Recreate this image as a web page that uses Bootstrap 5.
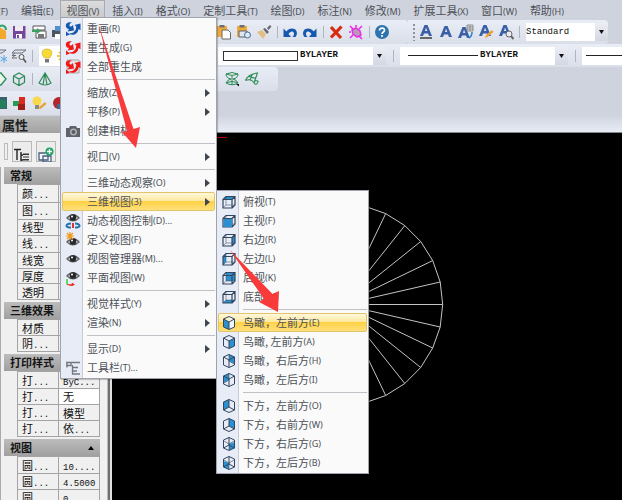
<!DOCTYPE html>
<html lang="zh-CN">
<head>
<meta charset="utf-8">
<meta name="viewport" content="width=device-width, initial-scale=1">
<title>CAD</title>
<link href="https://cdn.jsdelivr.net/npm/bootstrap@5.3.0/dist/css/bootstrap.min.css" rel="stylesheet">
<style>
body{height:100vh;background:#cfd3dd;font:11px/18px "Noto Sans CJK SC",sans-serif;color:#4c5159}
small{font:9px/1 "Noto Sans",sans-serif}
button{font:inherit;color:inherit}
.menubar{height:18px;margin-bottom:2px}
.menubar button{border:1px solid transparent;border-bottom:0;background:none;padding:0 5px;line-height:16px;height:18px;margin-right:1px;flex:none}
.menubar button.open{background:linear-gradient(#dcdcdc,#c9c9c9);border-color:#a9abb0}
.menubar button:first-child{margin-left:-30px}
.bar{background:linear-gradient(#e9edf6,#d9dee8);height:24px;border-radius:0 4px 4px 0}
.tool{width:20px;height:20px;border:0;background:none;padding:0;display:flex;align-items:center;justify-content:center;flex:none}
svg.ico{width:16px;height:16px;flex:none}
.sepv{width:6px;height:12px;flex:none;background:linear-gradient(#aeb4c0,#aeb4c0) center/1px 12px no-repeat}
.grip{width:4px;height:18px;flex:none;background:radial-gradient(circle,#8d93a0 1px,transparent 1px) 0 0/4px 4px}
.left{width:214px;flex:none;overflow:hidden}
.left .tools{margin-left:-11px}
.combo{background:#fff;height:18px;flex:none;color:#111;font:9px/1 "Liberation Mono",monospace}
.combo select{appearance:none;border:0;background:none;font:inherit;color:inherit;padding:0;width:40px;flex:1}
.combo .drop{width:13px;height:18px;background:linear-gradient(#eceef4,#d3d7e2);display:flex;align-items:center;justify-content:center}
.combo .drop svg{width:5px;height:4px}
.bylayer{font-weight:bold}
.c-color{width:168px;padding-left:5px}
.c-line{width:168px}
.c-style{width:82px}
.swatch{width:75px;height:10px;border:1px solid #333;margin-right:2px}
.rule{height:1px;background:#222}
.c-line .rule{width:70px;margin-right:2px}
.layerbox{background:#fff;width:170px;height:20px}
.side{width:108px;flex:none;background:#f0f0f0;color:#111;border-right:1px solid #bbb;overflow:hidden;margin-top:1px}
.side h2{font:bold 13px/17px "Noto Sans CJK SC",sans-serif;background:linear-gradient(#bdbdbd,#a2a2a2);margin:0;padding-left:2px;height:17px;color:#222}
.side .sbtn{width:20px;height:21px;border:1px solid #b9b9b9;background:#ececec;padding:1px;flex:none}
.side .hand{width:4px;height:17px;border:1px solid #bbb;flex:none}
.props{border-left:1px solid #aaa;margin-top:5px;padding-left:3px;width:100px}
.sect h3{font:bold 11px/17px "Noto Sans CJK SC",sans-serif;height:17px;margin:0;padding:0 6px;background:linear-gradient(#bcbcbc,#a0a0a0);color:#151515}
.sect{margin-bottom:2px}
.sect h3 svg{width:6px;height:4px}
.sect table{width:83px;margin-left:13px;table-layout:fixed;border-collapse:collapse}
.sect td,.sect th{border:1px solid #a4a4a4;padding:0 0 0 4px;font-weight:400;line-height:14px;white-space:nowrap;overflow:hidden}
.sect i{font:9px/1 "Liberation Mono",monospace}
.rows7{height:116px}.rows2{height:33px}.rows4{height:66px}.rows3{height:50px}
.splitter{width:4px;flex:none;background:linear-gradient(90deg,#6f6f6f 2px,#e0e0e0 2px)}
.strip{height:18px;background:linear-gradient(#cfd3dd,#e8ecf5);border-bottom:1px solid #85888e}
.model{background:#000;min-height:0}
.model svg{width:400px;height:366px}
.cadmenu.dropdown-menu{--bs-dropdown-min-width:0;--bs-dropdown-font-size:11px;padding:1px;margin:0;border:1px solid #a0a3a9;border-radius:0;line-height:17px;background:linear-gradient(90deg,#e8ecf6 21px,#c9ccd4 21px,#c9ccd4 22px,#fafafa 22px);box-shadow:1px 1px 1px #0003}
.cadmenu .dropdown-item{display:flex;align-items:center;height:19px;padding:0 4px 0 0;color:#4c5159;border:1px solid transparent;border-radius:2px}
.cadmenu .dropdown-item.hot{background:linear-gradient(#fff8dc,#ffe9a0 45%,#ffd246 50%,#ffe07a);border-color:#e3c36c}
.cadmenu .pic{width:20px;margin-right:4px;display:flex;justify-content:center}
.cadmenu hr{margin:3px 0 3px 25px;border-top:1px solid #bfc1c6;opacity:1}
.cadmenu .more{width:5px;height:8px;margin-left:auto;fill:#3f4650}
.m1.dropdown-menu{left:60px;top:17px;width:157px}
.m2.dropdown-menu{left:216px;top:190px;width:153px}
.hl{fill:#2b8fd0}
.marks{left:0;top:0;width:622px;height:500px;z-index:2000;pointer-events:none;fill:#f93a3a}
</style>
<script src="https://cdn.jsdelivr.net/npm/bootstrap@5.3.0/dist/js/bootstrap.bundle.min.js"></script>
</head>
<body class="d-flex flex-column overflow-hidden position-relative">
<svg class="d-none">
<symbol id="cube" viewBox="0 0 16 16"><path d="M2 5.500h9v8.500H2zM2 5.500L5 2.500h9V11l-3 3M11 5.500l3-3" fill="none" stroke="#33475e" stroke-width="1.200"/><path d="M5 2.500V11M2 14l3-3h9" fill="none" stroke="#33475e" stroke-width=".5"/></symbol>
<symbol id="iso" viewBox="0 0 16 16"><path d="M8 1.500L13.500 4v8L8 14.500 2.500 12V4zM2.500 4L8 7l5.500-3M8 7v7.500" fill="none" stroke="#33475e"/></symbol>
<symbol id="iso2" viewBox="0 0 16 16"><path d="M8 1.500L13.500 4v8L8 14.500 2.500 12V4zM2.500 12L8 9l5.500 3M8 1.500V9" fill="none" stroke="#33475e"/></symbol>
<symbol id="swap" viewBox="0 0 16 16"><path d="M7 1.500C3 .5 .5 2.500 .8 5 1 7 2.500 7.800 4 8L2.500 10.500 9 9.500 8 4 6.300 5.600C4 5.500 3.500 3 7 1.500z"/><path d="M15.500 2.500L9.500 4l1.700 1.500C11.500 9 9 12.500 4 12.500 7.500 15.500 13 13 13.500 8l2 1.200z"/><path d="M1 10.500v4.500l4-1.500z"/></symbol>
<symbol id="eye" viewBox="0 0 16 16"><path d="M1 8Q8 0 15 8Q8 15 1 8z" fill="#5d6064"/><path d="M3 8Q8 3.500 13 8Q8 12 3 8z" fill="#e9e9e9"/><circle cx="8" cy="7.500" r="3.300" fill="#26282b"/><circle cx="7" cy="6.500" r="1" fill="#fff"/></symbol>
<symbol id="undo" viewBox="0 0 16 16"><path d="M1.500 4.500V13H9L6.500 10C8 7.300 11.500 6.500 12 9.500c.2 1.500-.6 2.500-1.500 3.500h3C15.500 11 15.500 7 13 5.300 10 3.500 6.500 4.500 4.300 7.500z" fill="#1558ae"/></symbol>
<symbol id="down" viewBox="0 0 5 4"><path d="M0 0h5L2.500 4z" fill="#111"/></symbol>
<symbol id="more" viewBox="0 0 5 8"><path d="M0 0l5 4-5 4z"/></symbol>
<symbol id="letter" viewBox="0 0 16 16"><path d="M2 13L6.500 2h3L14 13h-3l-1-2.500H6L5 13zM7 8h2.300L8 4.500z" fill="#3a5fa6"/></symbol>
<symbol id="paste" viewBox="0 0 16 16"><path d="M1 2h10v11H1z" fill="#f0a93b"/><path d="M3.500 1h5v2.500h-5z" fill="#6b6f76"/></symbol>
<symbol id="layers" viewBox="0 0 16 16"><path d="M4 2h11l-4 3H1zM1 7.500h4M4 5l-3 2.500M1 10h5M4 7.500L1 10" fill="none" stroke="#6b7078"/></symbol>
</svg>

<nav class="menubar d-flex flex-nowrap" aria-label="菜单">
<button>文件<small>(F)</small></button><button>编辑<small>(E)</small></button><button class="open">视图<small>(V)</small></button><button>插入<small>(I)</small></button><button>格式<small>(O)</small></button><button>定制工具<small>(T)</small></button><button>绘图<small>(D)</small></button><button>标注<small>(N)</small></button><button>修改<small>(M)</small></button><button>扩展工具<small>(X)</small></button><button>窗口<small>(W)</small></button><button>帮助<small>(H)</small></button>
</nav>

<div class="d-flex">
 <div class="bar d-flex align-items-center left rounded-0"><div class="tools d-flex">
  <button class="tool" aria-label="打开"><svg class="ico" viewBox="0 0 16 16"><path d="M1 4h9l5 3v8H1z" fill="#f3a92e"/><path d="M8 3c3-3 7-1 7 3" fill="none" stroke="#2fa36b" stroke-width="2"/></svg></button>
  <button class="tool" aria-label="保存"><svg class="ico" viewBox="0 0 16 16"><path d="M2 2h12.500v12.500H2z" fill="#74479b"/><path d="M4 2h8v5H4z" fill="#efe9f5"/><path d="M5 10h6v4.500H5z" fill="#fff"/><path d="M6 11h2v3H6z" fill="#74479b"/></svg></button>
  <button class="tool" aria-label="另存"><svg class="ico" viewBox="0 0 16 16"><path d="M2 2h12v4H2zM5 7h10v7H5z" fill="#fff" stroke="#555"/><path d="M7 10h6v4H7z" fill="#777"/><path d="M1 6h5V4l4 3-4 3V8H1z" fill="#38a060"/></svg></button>
  <button class="tool" aria-label="打印"><svg class="ico" viewBox="0 0 16 16"><path d="M1 6h14v7H1z" fill="#4d5660"/><path d="M4 2h8v5H4z" fill="#4f90d0"/><path d="M4 10h8v5H4z" fill="#fff"/></svg></button>
 </div></div>
 <div class="bar d-flex align-items-center pe-3">
  <button class="tool" aria-label="粘贴"><svg class="ico" viewBox="0 0 16 16"><use href="#paste"/><path d="M6 6h6l2.500 2.500V15H6z" fill="#fff" stroke="#666"/></svg></button>
  <button class="tool" aria-label="粘贴为块"><svg class="ico" viewBox="0 0 16 16"><use href="#paste"/><path d="M3 7h8v6H3z" fill="#dfe6ef" stroke="#58616e"/><circle cx="11.500" cy="11" r="3" fill="#dce9f6" stroke="#4b6c94"/></svg></button>
  <button class="tool" aria-label="格式刷"><svg class="ico" viewBox="0 0 16 16"><path d="M1 8l5-2 4 4-3 5z" fill="#e3bd83"/><path d="M7 5l2-1 4 4-2 2zM11 4l3-3 1.500 1.500L12.500 6z" fill="#666a70"/></svg></button>
  <span class="sepv"></span>
  <button class="tool" aria-label="撤销"><svg class="ico"><use href="#undo"/></svg></button>
  <button class="tool" aria-label="重做"><svg class="ico" viewBox="0 0 16 16"><path d="M14.500 4.500V13H7L9.500 10C8 7.300 4.500 6.500 4 9.500c-.2 1.500.6 2.500 1.500 3.500h-3C.5 11 .5 7 3 5.300 6 3.500 9.500 4.500 11.700 7.500z" fill="#1558ae"/></svg></button>
  <span class="sepv"></span>
  <button class="tool" aria-label="删除"><svg class="ico" viewBox="0 0 16 16"><path d="M3 3l10 11M13.500 2.500L3 13.500" stroke="#dc2a10" stroke-width="3.200"/></svg></button>
  <button class="tool" aria-label="清理"><svg class="ico" viewBox="0 0 16 16"><path d="M4 6l4-2 4 3 1 4-4 2-4-3z" fill="#b79bb9" stroke="#e72fe0" stroke-width="1.500"/><path d="M2 2l3 3M14 2l-3 3M2 14l3-3M14 15l-3-3M8 1v2M1 8h2" stroke="#f022e6" stroke-width="1.500"/></svg></button>
  <span class="sepv"></span>
  <button class="tool" aria-label="帮助"><svg class="ico" viewBox="0 0 16 16"><circle cx="8" cy="8" r="7" fill="#2d74ae"/><path d="M5.500 6.500C5.500 3 11 3.500 10.500 6.500 10.300 8 8 8 8 10" fill="none" stroke="#fff" stroke-width="1.700"/><circle cx="8" cy="12" r="1.100" fill="#fff"/></svg></button>
 </div>
 <div class="bar d-flex align-items-center flex-none">
  <span class="grip ms-1"></span>
  <button class="tool" aria-label="文字"><svg class="ico" viewBox="0 0 16 16"><use href="#letter" y="-1"/><path d="M2 14h12" stroke="#222" stroke-width="1.300"/></svg></button>
  <button class="tool" aria-label="单行文字"><svg class="ico"><use href="#letter"/></svg></button>
  <button class="tool" aria-label="文字对齐"><svg class="ico" viewBox="0 0 16 16"><use href="#letter" x="-2" y="1"/><path d="M9 1h6v6H9zM9 3h6M9 5h6M12 1v6" fill="#eee" stroke="#777" stroke-width=".8"/><path d="M14 8c0 4-1 5-3 6" fill="none" stroke="#2486cf" stroke-width="1.500"/></svg></button>
  <button class="tool" aria-label="编辑文字"><svg class="ico" viewBox="0 0 16 16"><use href="#letter" x="-1" y="-1"/><path d="M7 14l1-3 6-5 1.500 2-6 5z" fill="#eda33c"/></svg></button>
  <button class="tool" aria-label="查找"><svg class="ico" viewBox="0 0 16 16"><use href="#letter" x="-1" y="-1"/><circle cx="11" cy="10" r="3" fill="#e8ecf4" stroke="#666"/><path d="M13 12l2.500 3" stroke="#666" stroke-width="2"/></svg></button>
  <span class="sepv me-1"></span>
  <div class="combo c-style d-flex align-items-center"><select aria-label="文字样式"><option>Standard</option></select><span class="drop"><svg><use href="#down"/></svg></span></div>
 </div>
</div>

<div class="bar d-flex align-items-center rounded-0">
 <div class="left d-flex align-items-center me-1"><div class="tools d-flex align-items-center">
  <button class="tool" aria-label="冻结"><svg class="ico" viewBox="0 0 16 16"><use href="#layers"/><path d="M13 7v8M9.500 9l7 4M9.500 13l7-4" stroke="#58a6e8"/></svg></button>
  <button class="tool" aria-label="图层"><svg class="ico" viewBox="0 0 16 16"><use href="#layers"/><circle cx="10.500" cy="9" r="2.500" fill="#eee" stroke="#555"/><path d="M12.500 11l2.500 3.500" stroke="#555" stroke-width="1.600"/></svg></button>
  <span class="sepv me-1"></span>
  <div class="layerbox d-flex align-items-center"><svg class="ico" viewBox="0 0 16 16"><path d="M8 1c6 0 6 5 2.500 9h-5C2 6 2 1 8 1z" fill="#f8d935" stroke="#c9a92b" stroke-width=".6"/><path d="M6 11h4v3.500H6z" fill="#777"/></svg><svg class="ico" viewBox="0 0 16 16"><path d="M8 2v12M2 8h12M4 4l8 8M12 4l-8 8" stroke="#f1ba16" stroke-width="1.500"/><circle cx="8" cy="8" r="3" fill="#f8d935"/></svg></div>
 </div></div>
 <div class="combo c-color bylayer d-flex align-items-center"><span class="swatch"></span><select aria-label="颜色"><option>BYLAYER</option></select><span class="drop"><svg><use href="#down"/></svg></span></div>
 <span class="sepv mx-1"></span>
 <div class="combo c-line bylayer d-flex align-items-center"><span class="rule ms-2"></span><select aria-label="线型"><option>BYLAYER</option></select><span class="drop"><svg><use href="#down"/></svg></span></div>
 <span class="sepv mx-1"></span>
 <div class="combo flex-fill d-flex align-items-center"><span class="rule ms-1 flex-fill"></span></div>
</div>

<div class="d-flex">
 <div class="bar d-flex align-items-center left rounded-0"><div class="tools d-flex align-items-center">
  <button class="tool" aria-label="面"><svg class="ico" viewBox="0 0 16 16"><path d="M4 2h6l5 6-5 6H5z" fill="#e9f5ec" stroke="#2c8a55" stroke-width="1.300"/></svg></button>
  <button class="tool" aria-label="长方体"><svg class="ico" viewBox="0 0 16 16"><path d="M8 2l5.500 3v6.500L8 14.500l-5.500-3V5zM2.500 5L8 8l5.500-3M8 8v6.500" fill="none" stroke="#2c8a55" stroke-width="1.200"/></svg></button>
  <span class="sepv"></span>
  <button class="tool" aria-label="圆锥"><svg class="ico" viewBox="0 0 16 16"><path d="M8 2L2 12q6 4 12 0zM8 2L6 14M8 2l2 12" fill="none" stroke="#2c8a55" stroke-width="1.200"/></svg></button>
 </div></div>
 <div class="bar d-flex align-items-center ps-2 pe-3">
  <button class="tool" aria-label="旋转曲面"><svg class="ico" viewBox="0 0 16 16"><path d="M2 3q6-3 12 0 0 4-5 5 4 1 5 4-6 3.500-12 0 1-3 5-4-5-1-5-5zM2 3q6 3 12 0M8 5v9M3 11.500q5-2 10 0" fill="none" stroke="#2c8a55"/><path d="M12 13h3v2.500z" fill="#111"/></svg></button>
  <button class="tool" aria-label="边界曲面"><svg class="ico" viewBox="0 0 16 16"><path d="M1.500 9.500Q4 3 13.500 2L10 12M1.500 9.500q5-2 8 1.500 2 4 4 1t-3-2M5 5q2 2 7 2M8.500 3L6 9" fill="none" stroke="#2c8a55" stroke-width="1.100"/></svg></button>
 </div>
</div>

<div class="bar left d-flex align-items-center rounded-0"><div class="tools d-flex">
 <button class="tool" aria-label="渲染"><svg class="ico" viewBox="0 0 16 16"><path d="M1 2h15v12H1z" fill="#39616b"/><path d="M9 5h6v8H9z" fill="#257f5d"/></svg></button>
 <button class="tool" aria-label="材质"><svg class="ico" viewBox="0 0 16 16"><path d="M2 6h6v5H2z" fill="#2b9a55"/><path d="M8 2h6v7H8z" fill="#d92b20"/><path d="M7 9h7v6H7z" fill="#a01c18"/></svg></button>
 <button class="tool" aria-label="光源"><svg class="ico" viewBox="0 0 16 16"><circle cx="6" cy="6" r="4.500" fill="#fbd84a"/><path d="M4 10h4v4H4z" fill="#8a8a80"/><path d="M7 13l7-6 1.500 2-6 5z" fill="#e6a33b"/></svg></button>
 <button class="tool" aria-label="贴图"><svg class="ico" viewBox="0 0 16 16"><circle cx="8" cy="8" r="6" fill="#b3262a"/><path d="M6 9h9v5H6z" fill="#3f6796"/></svg></button>
</div></div>

<main class="d-flex flex-fill overflow-hidden">
 <aside class="side">
  <h2>属性</h2>
  <div class="d-flex align-items-center ps-1 pt-2 gap-1 overflow-hidden">
   <span class="hand"></span>
   <button class="sbtn" aria-label="分类"><svg class="ico" viewBox="0 0 16 16"><path d="M0 2.500h7M3 2.500V13M7 5v9M7 8h2M7 13h2" stroke="#222" stroke-width="1.400" fill="none"/><path d="M9 6.500h6V8H9zM9 12h6v1.500H9zM9 9.500h6v1H9z" fill="#333"/></svg></button>
   <button class="sbtn" aria-label="选择"><svg class="ico" viewBox="0 0 16 16"><path d="M1 6h9v7H1zM5 9h8v6H5z" fill="#f4f6fa" stroke="#47607d" stroke-width="1.300"/><circle cx="11.500" cy="4.500" r="4" fill="#22a566"/><path d="M11.500 2v5M9 4.500h5" stroke="#fff" stroke-width="1.300"/></svg></button>
   <button class="sbtn" aria-label="快速选择"></button>
  </div>
  <div class="props">
   <section class="sect"><h3>常规</h3><table class="rows7">
    <tr><th>颜<i>...</i></th><td></td></tr><tr><th>图<i>...</i></th><td></td></tr><tr><th>线型</th><td></td></tr><tr><th>线<i>...</i></th><td></td></tr><tr><th>线宽</th><td></td></tr><tr><th>厚度</th><td></td></tr><tr><th>透明</th><td></td></tr></table></section>
   <section class="sect"><h3>三维效果</h3><table class="rows2"><tr><th>材质</th><td></td></tr><tr><th>阴<i>...</i></th><td></td></tr></table></section>
   <section class="sect"><h3>打印样式</h3><table class="rows4"><tr><th>打<i>...</i></th><td><i>ByC...</i></td></tr><tr><th>打<i>...</i></th><td class="bg-white">无</td></tr><tr><th>打<i>...</i></th><td>模型</td></tr><tr><th>打<i>...</i></th><td>依<i>...</i></td></tr></table></section>
   <section class="sect"><h3 class="d-flex align-items-center justify-content-between">视图<svg viewBox="0 0 6 4"><path d="M0 4h6L3 0z"/></svg></h3><table class="rows3"><tr><th>圆<i>...</i></th><td><i>10....</i></td></tr><tr><th>圆<i>...</i></th><td><i>4.5000</i></td></tr><tr><th>圆<i>...</i></th><td><i>0</i></td></tr></table></section>
  </div>
 </aside>
 <div class="splitter"></div>
 <div class="flex-fill d-flex flex-column">
  <div class="strip"></div>
  <div class="model flex-fill overflow-hidden">
   <svg viewBox="112 134 400 366" fill="none"><path d="M112 138.500H227" stroke="#b40000"/><path stroke="#c4c4c4" d="M342 305.500H442.700M342 305.500L440.200 283M342 305.500L432.700 261.600M342 305.500L420.700 242.500M342 305.500L404.800 226.600M342 305.500L385.700 214.600M342 305.500L440.200 328M342 305.500L432.700 349M342 305.500L420.700 368.500M342 305.500L404.800 384.500M342 305.500L385.700 396.500M364.400 207.100L385.700 214.600 404.800 226.600 420.700 242.500 432.700 261.600 440.200 283 442.700 305.500 440.200 328 432.700 349 420.700 368.500 404.800 384.500 385.700 396.500 364.400 404"/></svg>
  </div>
 </div>
</main>

<div class="dropdown-menu show cadmenu m1">
 <button class="dropdown-item"><span class="pic"><svg class="ico" fill="#1558ae"><use href="#swap"/></svg></span>重画<small>(R)</small></button>
 <button class="dropdown-item"><span class="pic"><svg class="ico" fill="#f01818"><use href="#swap"/></svg></span>重生成<small>(G)</small></button>
 <button class="dropdown-item"><span class="pic"><svg class="ico" viewBox="0 0 16 16" fill="#f01818"><path d="M2 1h12v13H2z" fill="#e4e4e4" stroke="#aaa"/><use href="#swap"/></svg></span>全部重生成</button>
 <hr>
 <button class="dropdown-item"><span class="pic"></span>缩放<small>(Z)</small><svg class="more"><use href="#more"/></svg></button>
 <button class="dropdown-item"><span class="pic"></span>平移<small>(P)</small><svg class="more"><use href="#more"/></svg></button>
 <button class="dropdown-item"><span class="pic"><svg class="ico" viewBox="0 0 16 16"><path d="M1 5h3l1-2h6l1 2h3v9H1z" fill="#5f6368"/><circle cx="8.500" cy="9" r="3.500" fill="#aeb2b7"/><circle cx="8.500" cy="9" r="2" fill="#5a5e63"/></svg></span>创建相机</button>
 <hr>
 <button class="dropdown-item"><span class="pic"></span>视口<small>(V)</small><svg class="more"><use href="#more"/></svg></button>
 <hr>
 <button class="dropdown-item"><span class="pic"></span>三维动态观察<small>(O)</small><svg class="more"><use href="#more"/></svg></button>
 <button class="dropdown-item hot"><span class="pic"></span>三维视图<small>(3)</small><svg class="more"><use href="#more"/></svg></button>
 <button class="dropdown-item"><span class="pic"><svg class="ico" viewBox="0 0 16 16"><use href="#eye" y="-3"/><path d="M6 10.500C0 11 0 14.500 6 14.500M10 10.500c6 .5 6 4 0 4" fill="none" stroke="#2272b0" stroke-width="2"/><path d="M7 10h2v5H7z" fill="#d33"/></svg></span>动态视图控制<small>(D)...</small></button>
 <button class="dropdown-item"><span class="pic"><svg class="ico" viewBox="0 0 16 16"><use href="#eye" y="2"/><path d="M5 0v8M1 4h8M2 1l6 6M8 1L2 7" stroke="#f09a1a" stroke-width="1.200"/></svg></span>定义视图<small>(F)</small></button>
 <button class="dropdown-item"><span class="pic"><svg class="ico"><use href="#eye"/></svg></span>视图管理器<small>(M)...</small></button>
 <button class="dropdown-item"><span class="pic"><svg class="ico" viewBox="0 0 16 16"><use href="#eye" y="-2"/><path d="M2 9v5.500" stroke="#35d435" stroke-width="1.500"/><path d="M2 14.500h5V13l2.500 1.500L7 16z" fill="#e22" stroke="#e22" stroke-width=".5"/></svg></span>平面视图<small>(W)</small></button>
 <hr>
 <button class="dropdown-item"><span class="pic"></span>视觉样式<small>(Y)</small><svg class="more"><use href="#more"/></svg></button>
 <button class="dropdown-item"><span class="pic"></span>渲染<small>(N)</small><svg class="more"><use href="#more"/></svg></button>
 <hr>
 <button class="dropdown-item"><span class="pic"></span>显示<small>(D)</small><svg class="more"><use href="#more"/></svg></button>
 <button class="dropdown-item"><span class="pic"><svg class="ico" viewBox="0 0 16 16"><path d="M1 2.500h14M1 5.500h5V3M2 2.500v5M7.500 5v9H15M7.500 7.500H13M7.500 11H12" fill="none" stroke="#73777d" stroke-width="1.300"/></svg></span>工具栏<small>(T)...</small></button>
</div>

<div class="dropdown-menu show cadmenu m2">
 <button class="dropdown-item"><span class="pic"><svg class="ico" viewBox="0 0 16 16"><path class="hl" d="M2 5.500l3-3h9l-3 3z"/><use href="#cube"/></svg></span>俯视<small>(T)</small></button>
 <button class="dropdown-item"><span class="pic"><svg class="ico" viewBox="0 0 16 16"><use href="#cube"/><path class="hl" d="M2.500 6H11v8H2.500z"/></svg></span>主视<small>(F)</small></button>
 <button class="dropdown-item"><span class="pic"><svg class="ico" viewBox="0 0 16 16"><path class="hl" d="M11 5.500l3-3V11l-3 3z"/><use href="#cube"/></svg></span>右边<small>(R)</small></button>
 <button class="dropdown-item"><span class="pic"><svg class="ico" viewBox="0 0 16 16"><path class="hl" d="M2 5.500l3-3V11l-3 3z"/><use href="#cube"/></svg></span>左边<small>(L)</small></button>
 <button class="dropdown-item"><span class="pic"><svg class="ico" viewBox="0 0 16 16"><path class="hl" d="M5 2.500h9V11H5z"/><use href="#cube"/></svg></span>后视<small>(K)</small></button>
 <button class="dropdown-item"><span class="pic"><svg class="ico" viewBox="0 0 16 16"><path class="hl" d="M2 14l3-3h9l-3 3z"/><use href="#cube"/></svg></span>底部<small>(M)</small></button>
 <hr>
 <button class="dropdown-item hot"><span class="pic"><svg class="ico" viewBox="0 0 16 16"><path fill="#f2f5f9" d="M8 1.500L13.500 4v8L8 14.500z"/><path class="hl" d="M2.500 4L8 7v7.500L2.500 12z"/><use href="#iso"/></svg></span>鸟瞰，左前方<small>(E)</small></button>
 <button class="dropdown-item"><span class="pic"><svg class="ico" viewBox="0 0 16 16"><path class="hl" d="M13.500 4L8 7v7.500l5.500-2.500z"/><use href="#iso"/></svg></span>鸟瞰, 左前方<small>(A)</small></button>
 <button class="dropdown-item"><span class="pic"><svg class="ico" viewBox="0 0 16 16"><path class="hl" d="M8 1.500L13.500 4v7L8 8z"/><use href="#iso"/><path d="M8 1.500V8l5 3" stroke="#33475e" stroke-width=".6" fill="none"/></svg></span>鸟瞰，右后方<small>(H)</small></button>
 <button class="dropdown-item"><span class="pic"><svg class="ico" viewBox="0 0 16 16"><path class="hl" d="M8 1.500L2.500 4v7L8 8z"/><use href="#iso"/><path d="M8 1.500V8l-5 3" stroke="#33475e" stroke-width=".6" fill="none"/></svg></span>鸟瞰，左后方<small>(I)</small></button>
 <hr>
 <button class="dropdown-item"><span class="pic"><svg class="ico" viewBox="0 0 16 16"><path class="hl" d="M8 1.500L2.500 4v8L8 9z"/><use href="#iso2"/></svg></span>下方，左前方<small>(O)</small></button>
 <button class="dropdown-item"><span class="pic"><svg class="ico" viewBox="0 0 16 16"><path class="hl" d="M8 1.500L13.500 4v8L8 9z"/><use href="#iso2"/></svg></span>下方，右前方<small>(W)</small></button>
 <button class="dropdown-item"><span class="pic"><svg class="ico" viewBox="0 0 16 16"><path class="hl" d="M8 8l5.500-2v6L8 14.500z"/><use href="#iso2"/><path d="M3 5l5 3 5-3M8 8v6" stroke="#33475e" stroke-width=".6" fill="none"/></svg></span>下方，右后方<small>(G)</small></button>
 <button class="dropdown-item"><span class="pic"><svg class="ico" viewBox="0 0 16 16"><path class="hl" d="M8 8L2.500 6v6L8 14.500z"/><use href="#iso2"/><path d="M3 5l5 3 5-3M8 8v6" stroke="#33475e" stroke-width=".6" fill="none"/></svg></span>下方，左后方<small>(B)</small></button>
</div>

<svg class="marks position-absolute" viewBox="0 0 622 500"><path d="M98 23L133.500 129l6.500-2-4 21-14-16 5-1z"/><path d="M230 250l42.500 44 6.500-3-1 21-19-10 5-3z"/></svg>
</body>
</html>
